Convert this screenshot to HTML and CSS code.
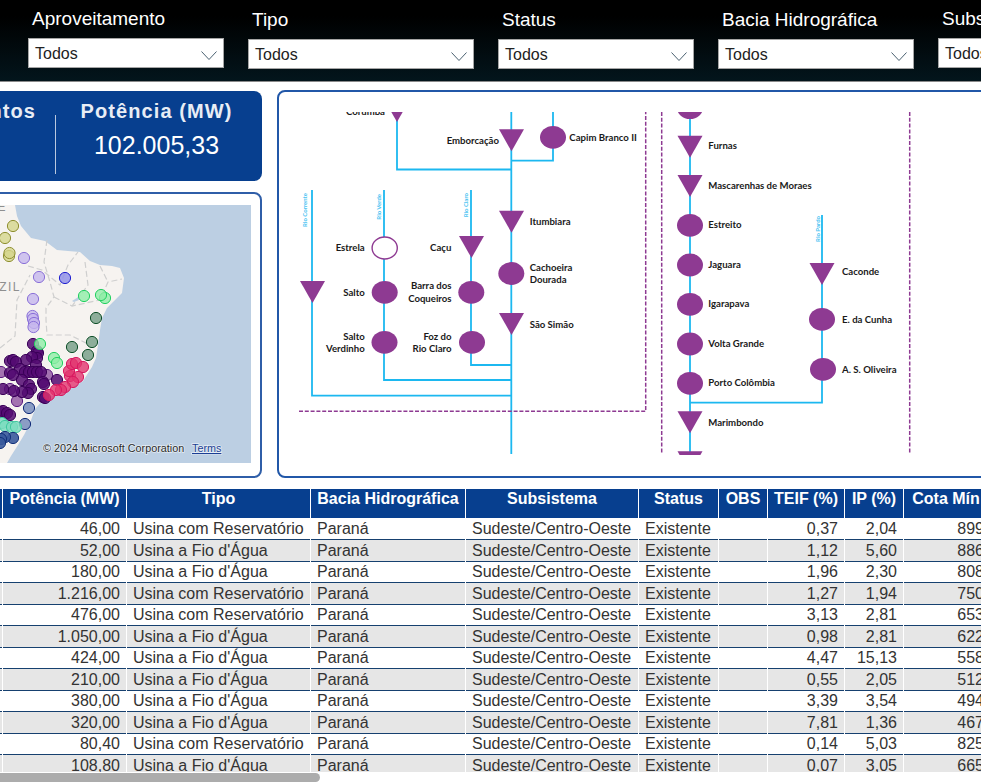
FILE: index.html
```html
<!DOCTYPE html>
<html>
<head>
    <title>Aproveitamentos Hidrelétricos</title>
    <meta charset="utf-8"/>
    <link rel="stylesheet" href="styles.css">
</head>
<body>
    <div class="topbar">
        <div class="filter filter-high">
            <div class="filter-label">Aproveitamento</div>
            <div class="filter-box">Todos <svg class="chevron" viewBox="0 0 16 9"><polyline points="0.5,0.5 8,8.5 15.5,0.5"/></svg></div>
        </div>
        <div class="filter filter-wide">
            <div class="filter-label">Tipo</div>
            <div class="filter-box">Todos <svg class="chevron" viewBox="0 0 16 9"><polyline points="0.5,0.5 8,8.5 15.5,0.5"/></svg></div>
        </div>
        <div class="filter">
            <div class="filter-label">Status</div>
            <div class="filter-box">Todos <svg class="chevron" viewBox="0 0 16 9"><polyline points="0.5,0.5 8,8.5 15.5,0.5"/></svg></div>
        </div>
        <div class="filter">
            <div class="filter-label">Bacia Hidrográfica</div>
            <div class="filter-box">Todos <svg class="chevron" viewBox="0 0 16 9"><polyline points="0.5,0.5 8,8.5 15.5,0.5"/></svg></div>
        </div>
        <div class="filter filter-high">
            <div class="filter-label">Subsistema</div>
            <div class="filter-box">Todos <svg class="chevron" viewBox="0 0 16 9"><polyline points="0.5,0.5 8,8.5 15.5,0.5"/></svg></div>
        </div>
    </div>

    <div class="main">
        <div class="left-col">
            <div class="kpi-card">
                <div class="kpi kpi-first">
                    <div class="kpi-title">Aproveitamentos</div>
                </div>
                <div class="kpi-divider"></div>
                <div class="kpi">
                    <div class="kpi-title">Potência (MW)</div>
                    <div class="kpi-value">102.005,33</div>
                </div>
            </div>
            <div class="map-card">
                <svg class="map" viewBox="0 205 251 258" width="251" height="258">
                    <rect class="ocean" x="0" y="205" width="251" height="258"/>
                    <path class="land" d="M0 205 L15 205 L17 216 L21 226 L31 238 L45 241 L57 250 L68 251 L80 252 L90 261 L100 265 L112 266 L120 268 L124 278 L122 293 L113 302 L107 308 L102 318 L100 330 L98 345 L96 358 L92 367 L83 381 L68 390 L52 396 L42 401 L35 409 L30 423 L24 435 L18 445 L11 456 L7 463 L0 463 Z"/>
                    <path class="state-line" d="M47 240 L44 262 L50 282 L54 297 L46 308 L46 320 L47 335 L70 335 L90 345"/>
                    <path class="state-line" d="M28 266 L42 270 L60 285 L68 265 L78 252"/>
                    <path class="state-line" d="M0 348 L15 336 L17 300 L30 275"/>
                    <path class="state-line" d="M54 297 L72 306 L100 300 L108 282 L122 279"/>
                    <path class="state-line" d="M100 266 L108 282 M85 262 L88 285 L72 306"/>
                    <path class="lake" d="M72 301 L80 296 L79 300 L74 302 Z"/>
                    <text class="map-name" x="21" y="291" text-anchor="end">BRAZIL</text>
                    <text class="map-name" x="7" y="211" text-anchor="end">E</text>
                    <g class="dots dots-yellow">
                        <circle cx="13" cy="226"/><circle cx="5" cy="238"/>
                        <circle cx="9" cy="256"/><circle cx="9.5" cy="253"/>
                    </g>
                    <g class="dots dots-lilac">
                        <circle cx="24" cy="258"/><circle cx="39" cy="277"/>
                        <circle cx="33" cy="299"/><circle cx="32.5" cy="316"/>
                        <circle cx="33" cy="319"/><circle cx="34" cy="323"/>
                        <circle cx="33.5" cy="327"/>
                    </g>
                    <g class="dots dots-blue"><circle cx="65" cy="278"/></g>
                    <g class="dots dots-plum">
                        <circle cx="1" cy="372"/><circle cx="17" cy="401"/>
                        <circle cx="47" cy="375"/><circle cx="10" cy="389"/>
                    </g>
                    <g class="dots dots-purple">
                        <circle cx="33" cy="344"/><circle cx="37" cy="351"/>
                        <circle cx="38" cy="353"/><circle cx="37" cy="358"/>
                        <circle cx="32" cy="357"/><circle cx="26" cy="360"/>
                        <circle cx="10" cy="361"/><circle cx="13" cy="360"/>
                        <circle cx="16" cy="362"/><circle cx="36" cy="365"/>
                        <circle cx="10" cy="373"/><circle cx="20" cy="369"/>
                        <circle cx="25" cy="372"/><circle cx="29" cy="372"/>
                        <circle cx="33" cy="372"/><circle cx="37" cy="372"/>
                        <circle cx="41" cy="372"/><circle cx="13" cy="375"/>
                        <circle cx="22" cy="380"/><circle cx="57" cy="380"/>
                        <circle cx="43" cy="382"/><circle cx="44" cy="384"/>
                        <circle cx="29" cy="385"/><circle cx="31" cy="389"/>
                        <circle cx="28" cy="393"/><circle cx="22" cy="392"/>
                        <circle cx="14" cy="391"/><circle cx="3" cy="389"/>
                        <circle cx="43" cy="397"/><circle cx="45" cy="398"/>
                        <circle cx="0" cy="412"/><circle cx="3" cy="411"/>
                        <circle cx="7" cy="413"/><circle cx="10" cy="415"/>
                    </g>
                    <g class="dots dots-green">
                        <circle cx="84" cy="296"/><circle cx="105" cy="298"/>
                        <circle cx="101" cy="295"/><circle cx="40" cy="344"/>
                        <circle cx="54" cy="358"/><circle cx="57" cy="363"/>
                    </g>
                    <g class="dots dots-forest">
                        <circle cx="96" cy="318"/><circle cx="72" cy="347"/>
                        <circle cx="92" cy="342"/><circle cx="88" cy="355"/>
                    </g>
                    <g class="dots dots-pink">
                        <circle cx="70" cy="376"/><circle cx="69" cy="371"/>
                        <circle cx="72" cy="364"/><circle cx="76" cy="363"/>
                        <circle cx="83" cy="367"/><circle cx="78" cy="377"/>
                        <circle cx="73" cy="382"/><circle cx="65" cy="387"/>
                        <circle cx="61" cy="390"/><circle cx="56" cy="390"/>
                        <circle cx="49" cy="395"/>
                    </g>
                    <g class="dots dots-slate">
                        <circle cx="29" cy="408"/><circle cx="25" cy="424"/>
                    </g>
                    <g class="dots dots-teal">
                        <circle cx="2" cy="423"/><circle cx="5" cy="426"/>
                        <circle cx="12" cy="427"/><circle cx="16" cy="427"/>
                    </g>
                    <g class="dots dots-navy">
                        <circle cx="13" cy="438"/><circle cx="5" cy="437"/>
                        <circle cx="1" cy="439"/><circle cx="0" cy="443"/>
                    </g>
                    <text class="map-credit" x="43" y="452">© 2024 Microsoft Corporation</text>
                    <text class="map-terms" x="192" y="452">Terms</text>
                </svg>
            </div>
        </div>

        <div class="diagram-card">
            <svg class="diagram" viewBox="279 112 702 343" width="702" height="343">
                <!-- rios -->
                <g class="river">
                    <polyline points="397,112 397,169.5 511.3,169.5"/>
                    <polyline points="553,112 553,160.7 511.3,160.7"/>
                    <line x1="511.3" y1="112" x2="511.3" y2="454"/>
                    <polyline points="312,190 312,395.7 511.3,395.7"/>
                    <polyline points="384,190 384,380 511.3,380"/>
                    <polyline points="471,190 471,365 511.3,365"/>
                    <line x1="690" y1="112" x2="690" y2="455"/>
                    <polyline points="822,215 822,402.7 690,402.7"/>
                </g>
                <g class="limit">
                    <polyline points="299,411.3 645.7,411.3 645.7,112"/>
                    <line x1="661.7" y1="112" x2="661.7" y2="454"/>
                    <line x1="909.7" y1="112" x2="909.7" y2="453"/>
                </g>
                <g class="plant">
                    <polygon points="384.5,100 409.5,100 397,122"/>
                    <polygon points="499,129.3 524,129.3 511.5,151.3"/>
                    <polygon points="499,210.7 524,210.7 511.5,232.7"/>
                    <polygon points="499,313 524,313 511.5,335"/>
                    <polygon points="300,281 325,281 312.5,303"/>
                    <polygon points="459,236 484,236 471.5,258"/>
                    <polygon points="677.5,135.7 702.5,135.7 690,157.7"/>
                    <polygon points="677.5,175 702.5,175 690,197"/>
                    <polygon points="677.5,411.3 702.5,411.3 690,433.3"/>
                    <polygon points="677.5,451.3 702.5,451.3 690,473.3"/>
                    <polygon points="809.5,263 834.5,263 822,285"/>
                    <ellipse cx="553" cy="137.3" rx="13" ry="11.4"/>
                    <ellipse cx="511.3" cy="273.5" rx="13" ry="11.4"/>
                    <ellipse cx="384.7" cy="292.3" rx="13" ry="11.4"/>
                    <ellipse cx="384.5" cy="342.3" rx="13" ry="11.4"/>
                    <ellipse cx="471.3" cy="292.3" rx="13" ry="11.4"/>
                    <ellipse cx="472" cy="342.3" rx="13" ry="11.4"/>
                    <ellipse cx="690" cy="107.7" rx="13" ry="11.4"/>
                    <ellipse cx="690" cy="225.3" rx="13" ry="11.4"/>
                    <ellipse cx="690" cy="265" rx="13" ry="11.4"/>
                    <ellipse cx="690" cy="304.3" rx="13" ry="11.4"/>
                    <ellipse cx="690" cy="344" rx="13" ry="11.4"/>
                    <ellipse cx="690" cy="383.3" rx="13" ry="11.4"/>
                    <ellipse cx="822" cy="319.3" rx="13" ry="11.4"/>
                    <ellipse cx="823" cy="369.3" rx="13" ry="11.4"/>
                </g>
                <ellipse class="plant-open" cx="384.7" cy="248" rx="12.6" ry="11"/>
                <g class="plant-name name-right">
                    <text x="385" y="115">Corumbá</text>
                    <text x="499" y="144">Emborcação</text>
                    <text x="364.7" y="250.7">Estrela</text>
                    <text x="451.3" y="250.7">Caçu</text>
                    <text x="364.7" y="295.7">Salto</text>
                    <text x="451.5" y="289.3">Barra dos</text>
                    <text x="451.5" y="301.7">Coqueiros</text>
                    <text x="364.7" y="339.7">Salto</text>
                    <text x="364.7" y="352">Verdinho</text>
                    <text x="451.5" y="339.7">Foz do</text>
                    <text x="451.5" y="352">Rio Claro</text>
                </g>
                <g class="plant-name">
                    <text x="569.3" y="140.7">Capim Branco II</text>
                    <text x="529.7" y="225.3">Itumbiara</text>
                    <text x="529.7" y="271">Cachoeira</text>
                    <text x="529.7" y="283.3">Dourada</text>
                    <text x="529.7" y="327.7">São Simão</text>
                    <text x="708.3" y="149.3">Furnas</text>
                    <text x="708.3" y="188.7">Mascarenhas de Moraes</text>
                    <text x="708.3" y="228">Estreito</text>
                    <text x="708.3" y="267.7">Jaguara</text>
                    <text x="708.3" y="307">Igarapava</text>
                    <text x="708.3" y="346.7">Volta Grande</text>
                    <text x="708.3" y="386">Porto Colômbia</text>
                    <text x="708.3" y="425.7">Marimbondo</text>
                    <text x="842" y="275">Caconde</text>
                    <text x="842" y="322.7">E. da Cunha</text>
                    <text x="842" y="373">A. S. Oliveira</text>
                </g>
                <g class="river-name">
                    <text transform="translate(307 193) rotate(-90)">Rio Corrente</text>
                    <text transform="translate(381 194) rotate(-90)">Rio Verde</text>
                    <text transform="translate(468 193) rotate(-90)">Rio Claro</text>
                    <text transform="translate(820 216) rotate(-90)">Rio Pardo</text>
                </g>
            </svg>
        </div>
    </div>

    <div class="table-wrap">
        <table class="data-table">
            <colgroup>
                <col class="c-name"><col class="c-power"><col class="c-type"><col class="c-basin"><col class="c-sub"><col class="c-status"><col class="c-obs"><col class="c-teif"><col class="c-ip"><col class="c-cota">
            </colgroup>
            <thead>
                <tr><th></th><th>Potência (MW)</th><th>Tipo</th><th>Bacia Hidrográfica</th><th>Subsistema</th><th>Status</th><th>OBS</th><th>TEIF (%)</th><th>IP (%)</th><th>Cota Mín</th></tr>
            </thead>
            <tbody>
                <tr><td></td><td class="num">46,00</td><td>Usina com Reservatório</td><td>Paraná</td><td>Sudeste/Centro-Oeste</td><td>Existente</td><td></td><td class="num">0,37</td><td class="num">2,04</td><td class="num">899</td></tr>
                <tr><td></td><td class="num">52,00</td><td>Usina a Fio d'Água</td><td>Paraná</td><td>Sudeste/Centro-Oeste</td><td>Existente</td><td></td><td class="num">1,12</td><td class="num">5,60</td><td class="num">886</td></tr>
                <tr><td></td><td class="num">180,00</td><td>Usina a Fio d'Água</td><td>Paraná</td><td>Sudeste/Centro-Oeste</td><td>Existente</td><td></td><td class="num">1,96</td><td class="num">2,30</td><td class="num">808</td></tr>
                <tr><td></td><td class="num">1.216,00</td><td>Usina com Reservatório</td><td>Paraná</td><td>Sudeste/Centro-Oeste</td><td>Existente</td><td></td><td class="num">1,27</td><td class="num">1,94</td><td class="num">750</td></tr>
                <tr><td></td><td class="num">476,00</td><td>Usina com Reservatório</td><td>Paraná</td><td>Sudeste/Centro-Oeste</td><td>Existente</td><td></td><td class="num">3,13</td><td class="num">2,81</td><td class="num">653</td></tr>
                <tr><td></td><td class="num">1.050,00</td><td>Usina a Fio d'Água</td><td>Paraná</td><td>Sudeste/Centro-Oeste</td><td>Existente</td><td></td><td class="num">0,98</td><td class="num">2,81</td><td class="num">622</td></tr>
                <tr><td></td><td class="num">424,00</td><td>Usina a Fio d'Água</td><td>Paraná</td><td>Sudeste/Centro-Oeste</td><td>Existente</td><td></td><td class="num">4,47</td><td class="num">15,13</td><td class="num">558</td></tr>
                <tr><td></td><td class="num">210,00</td><td>Usina a Fio d'Água</td><td>Paraná</td><td>Sudeste/Centro-Oeste</td><td>Existente</td><td></td><td class="num">0,55</td><td class="num">2,05</td><td class="num">512</td></tr>
                <tr><td></td><td class="num">380,00</td><td>Usina a Fio d'Água</td><td>Paraná</td><td>Sudeste/Centro-Oeste</td><td>Existente</td><td></td><td class="num">3,39</td><td class="num">3,54</td><td class="num">494</td></tr>
                <tr><td></td><td class="num">320,00</td><td>Usina a Fio d'Água</td><td>Paraná</td><td>Sudeste/Centro-Oeste</td><td>Existente</td><td></td><td class="num">7,81</td><td class="num">1,36</td><td class="num">467</td></tr>
                <tr><td></td><td class="num">80,40</td><td>Usina com Reservatório</td><td>Paraná</td><td>Sudeste/Centro-Oeste</td><td>Existente</td><td></td><td class="num">0,14</td><td class="num">5,03</td><td class="num">825</td></tr>
                <tr><td></td><td class="num">108,80</td><td>Usina a Fio d'Água</td><td>Paraná</td><td>Sudeste/Centro-Oeste</td><td>Existente</td><td></td><td class="num">0,07</td><td class="num">3,05</td><td class="num">665</td></tr>
            </tbody>
        </table>
    </div>
    <div class="scrollbar"><div class="scroll-thumb"></div></div>
</body>
</html>
```

FILE: styles.css
```css
html, body {
    height: 782px;
    overflow: hidden;
}

body {
    margin: 0;
    background-color: #ffffff;
    font-family: "Liberation Sans", Arial, sans-serif;
    color: #333333;
}

/* filtros */
.topbar {
    display: flex;
    gap: 24px;
    height: 82px;
    box-sizing: border-box;
    padding: 9px 0 0 28px;
    background: linear-gradient(#000000 20%, #03151c);
    border-bottom: 1px solid #8a8a8a;
}

.filter {
    flex: 0 0 196px;
    padding-top: 1px;
}

.filter-wide {
    flex-basis: 226px;
}

.filter-high {
    padding-top: 0;
}

.filter-label {
    height: 20px;
    margin-bottom: 9px;
    padding-left: 4px;
    color: #ffffff;
    font-size: 19px;
    line-height: 20px;
    white-space: nowrap;
}

.filter-box {
    position: relative;
    box-sizing: border-box;
    height: 30px;
    padding-left: 6px;
    background-color: #ffffff;
    border: 1px solid #a6a6a6;
    color: #222222;
    font-size: 16px;
    line-height: 29px;
}

.chevron {
    position: absolute;
    right: 6px;
    top: 12px;
    width: 16px;
    height: 9px;
    fill: none;
    stroke: #4a6070;
    stroke-width: 1;
}

/* linha do meio */
.main {
    display: flex;
    gap: 15px;
    padding-top: 8px;
}

.left-col {
    display: flex;
    flex: 0 0 262px;
    flex-direction: column;
    align-items: flex-end;
    gap: 11px;
    min-width: 0;
    width: 262px;
    padding-top: 1px;
}

.kpi-card {
    display: flex;
    flex: 0 0 90px;
    width: 440px;
    background-color: #073f8f;
    border-radius: 8px;
    color: #ffffff;
}

.kpi {
    flex: 0 0 206px;
    box-sizing: border-box;
    padding: 9px 5px 0 0;
    text-align: center;
}

.kpi-first {
    flex: 0 0 233px;
    padding-right: 19px;
    text-align: right;
}

.kpi-title {
    font-size: 20px;
    font-weight: bold;
    line-height: 22px;
    letter-spacing: 1.1px;
    color: #e8edf5;
}

.kpi-value {
    margin-top: 9px;
    font-size: 25px;
    line-height: 28px;
}

.kpi-divider {
    flex: 0 0 1px;
    height: 59px;
    margin-top: 24px;
    background-color: #b9c8df;
}

.map-card {
    box-sizing: border-box;
    display: flex;
    justify-content: flex-end;
    flex: 0 0 286px;
    width: 500px;
    padding: 11px 9px 13px 0;
    background-color: #ffffff;
    border: 2px solid #2f5ea8;
    border-radius: 8px;
}

.map {
    display: block;
    flex: none;
}

.ocean { fill: #bccfe3; }
.land { fill: #f6f3f0; }
.lake { fill: #bccfe3; }

.state-line {
    fill: none;
    stroke: #cfcfcf;
    stroke-width: 1.2;
    stroke-dasharray: 6 3;
}

.map-name {
    fill: #8f8f8f;
    font-size: 12px;
    letter-spacing: 1.5px;
}

.dots circle {
    r: 5.6px;
    stroke-width: 1;
}

.dots-yellow circle { fill: #d6d68c; fill-opacity: 0.8; stroke: #8f8f30; }
.dots-lilac circle { fill: #c5b6ee; fill-opacity: 0.8; stroke: #8a70d8; }
.dots-blue circle { fill: #8c8ce8; fill-opacity: 0.8; stroke: #2020d0; }
.dots-plum circle { fill: #9a64a8; fill-opacity: 0.9; stroke: #5a1a80; }
.dots-purple circle { fill: #530a72; fill-opacity: 0.85; stroke: #3a0058; }
.dots-green circle { fill: #90eea8; fill-opacity: 0.8; stroke: #22d060; }
.dots-forest circle { fill: #82a690; fill-opacity: 0.9; stroke: #0e4f28; }
.dots-pink circle { fill: #e2346f; fill-opacity: 0.8; stroke: #d81860; }
.dots-slate circle { fill: #8094c0; fill-opacity: 0.9; stroke: #102a78; }
.dots-teal circle { fill: #7cdcc0; fill-opacity: 0.85; stroke: #40c8a0; }
.dots-navy circle { fill: #3a5a9c; fill-opacity: 0.9; stroke: #12307a; }

.map-credit, .map-terms {
    font-size: 10.8px;
    paint-order: stroke;
    stroke: #ffffff;
    stroke-width: 1.5px;
    stroke-opacity: 0.6;
}

.map-credit { fill: #2a2a2a; }
.map-terms { fill: #1c3f94; text-decoration: underline; }

/* diagrama */
.diagram-card {
    box-sizing: border-box;
    flex: 0 0 800px;
    height: 388px;
    padding-top: 20px;
    background-color: #ffffff;
    border: 2px solid #2157a8;
    border-radius: 8px;
}

.diagram {
    display: block;
}

.river {
    fill: none;
    stroke: #1cb8f0;
    stroke-width: 1.8;
}

.limit {
    fill: none;
    stroke: #8e3a92;
    stroke-width: 1.5;
    stroke-dasharray: 4 1.8;
}

.plant { fill: #8e3a92; }

.plant-open {
    fill: #ffffff;
    stroke: #8e3a92;
    stroke-width: 1.4;
}

.plant-name {
    fill: #1a1a1a;
    font-family: Lato, "Open Sans", sans-serif;
    font-size: 9.6px;
    font-weight: bold;
}

.name-right { text-anchor: end; }

.river-name {
    fill: #4cc4f2;
    font-family: Lato, "Open Sans", sans-serif;
    font-size: 6px;
    font-weight: bold;
    text-anchor: end;
}

/* tabela */
.table-wrap {
    height: 283px;
    margin-top: 11px;
    overflow: hidden;
}

.data-table {
    table-layout: fixed;
    width: 1048px;
    margin-left: -59px;
    border-collapse: separate;
    border-spacing: 1px 0;
    font-size: 16px;
}

.c-name { width: 60px; }
.c-power { width: 123px; }
.c-type { width: 183px; }
.c-basin { width: 154px; }
.c-sub { width: 172px; }
.c-status { width: 79px; }
.c-obs { width: 48px; }
.c-teif { width: 76px; }
.c-ip { width: 58px; }
.c-cota { width: 84px; }

.data-table th {
    box-sizing: border-box;
    height: 28.5px;
    padding: 0;
    background-color: #073f8f;
    color: #ffffff;
    font-weight: bold;
    line-height: 20px;
    text-align: center;
    vertical-align: top;
    white-space: nowrap;
}

.data-table td {
    box-sizing: border-box;
    height: 21.5px;
    padding: 0 6px;
    border-top: 1px solid #16406f;
    line-height: 19px;
    white-space: nowrap;
    overflow: hidden;
}

.data-table tbody tr:first-child td {
    border-top: none;
}

.data-table tbody tr:nth-child(even) td {
    background-color: #e6e6e6;
}

.data-table .num {
    text-align: right;
}

.data-table .num:last-child {
    padding-right: 4px;
}

.scrollbar {
    height: 10px;
}

.scroll-thumb {
    width: 320px;
    height: 9px;
    margin-top: 1px;
    background-color: #acacac;
    border-radius: 0 5px 5px 0;
}
```
